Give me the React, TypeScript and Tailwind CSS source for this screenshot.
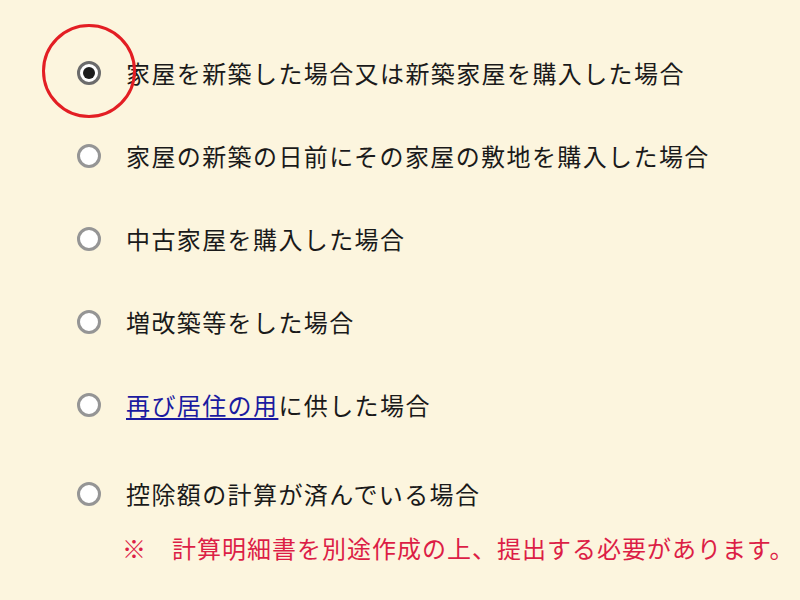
const options = [
  { label: "家屋を新築した場合又は新築家屋を購入した場合", checked: true },
  { label: "家屋の新築の日前にその家屋の敷地を購入した場合" },
  { label: "中古家屋を購入した場合" },
  { label: "増改築等をした場合" },
  { link: "再び居住の用", label: "に供した場合" },
]

function Radio({ checked = false }: { checked?: boolean }) {
  return (
    <span
      className={
        checked
          ? "flex h-[24px] w-[24px] shrink-0 items-center justify-center rounded-full border-[3px] border-[#6b6b6b] bg-white"
          : "flex h-[24px] w-[24px] shrink-0 items-center justify-center rounded-full border-[3px] border-[#959595] bg-white"
      }
    >
      {checked && <span className="h-[12px] w-[12px] rounded-full bg-[#1c1c1c]" />}
    </span>
  )
}

function Row({ label, link, checked }: { label: string; link?: string; checked?: boolean }) {
  return (
    <div className="flex h-[83px] items-center">
      <div className="relative ml-[77px]">
        <Radio checked={checked} />
        {checked && (
          <span className="absolute left-1/2 top-1/2 -mt-[2px] h-[94px] w-[94px] -translate-x-1/2 -translate-y-1/2 rounded-full border-[3px] border-[#e31e24]" />
        )}
      </div>
      <span className="ml-[25px] text-[24px] leading-none tracking-[1.4px] text-[#1a1a1a]">
        {link && <a className="text-[#1a1aa0] underline underline-offset-[3px]">{link}</a>}
        {label}
      </span>
    </div>
  )
}

export default function App() {
  return (
    <div className="min-h-screen w-full overflow-hidden bg-[#fcf5de] pt-[31px] font-['Noto_Sans_CJK_JP','Noto_Sans_CJK_SC',sans-serif]">
      {options.map((o, i) => (
        <Row key={i} label={o.label} link={o.link} checked={o.checked} />
      ))}

      <div className="mt-[28px]">
        <div className="flex h-[40px] items-center">
          <div className="ml-[77px]">
            <Radio />
          </div>
          <span className="ml-[25px] text-[24px] leading-none tracking-[1.4px] text-[#1a1a1a]">
            控除額の計算が済んでいる場合
          </span>
        </div>
        <p className="ml-[122px] mt-[19px] w-[670px] whitespace-nowrap text-[24px] leading-[30px] tracking-[1px] text-[#dc1e46]">
          ※　計算明細書を別途作成の上、提出する必要があります。
        </p>
      </div>
    </div>
  )
}
